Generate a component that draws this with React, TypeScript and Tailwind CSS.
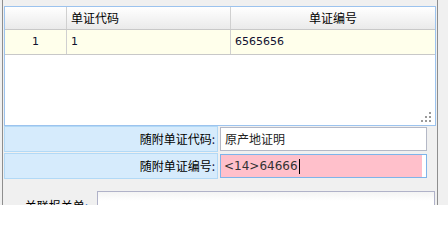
const cjk = { fontFamily: '"Noto Sans CJK SC", "DejaVu Sans", sans-serif' };
const num = { fontFamily: '"DejaVu Sans", "Noto Sans CJK SC", sans-serif' };

const Grip = () => (
  <svg className="absolute right-[3px] bottom-[2px]" width="11" height="11" viewBox="0 0 11 11">
    {[
      [8, 0],
      [4, 4],
      [8, 4],
      [0, 8],
      [4, 8],
      [8, 8],
    ].map(([x, y], i) => (
      <rect key={i} x={x} y={y} width="2" height="2" fill="#9a9a9a" />
    ))}
  </svg>
);

const FormRow = ({ label, children }: { label: string; children: React.ReactNode }) => (
  <div className="flex h-[26px] items-stretch">
    <div
      className="w-[214px] flex items-center justify-end pr-[2px] bg-[#d6ebfc] border border-[#b2d9f6] text-[12px] text-black"
      style={cjk}
    >
      {label}
      <span className="text-[#1a1a4a]">:</span>
    </div>
    <div className="w-[2px]" />
    <div className="flex-1 flex items-center pr-[9px] py-[1px]">{children}</div>
  </div>
);

export default function App() {
  return (
    <div className="w-[448px] h-[205px] bg-[#f0f0f0] overflow-hidden">
      <div className="ml-[2px] w-[436px] h-[205px] border-l border-r border-[#8e8e8e] pt-[6px] pl-[1px] pr-[1px]">
        {/* grid */}
        <div className="relative h-[120px] border border-[#9cc3ee] bg-white">
          <div className="flex h-[23px] border-b border-[#c8c8c8] bg-gradient-to-b from-white to-[#eaeaea] text-[12px] text-black" style={cjk}>
            <div className="w-[62px] border-r border-[#d0d0d0]" />
            <div className="w-[164px] border-r border-[#d0d0d0] flex items-center pl-[4px]">单证代码</div>
            <div className="flex-1 flex items-center justify-center">单证编号</div>
          </div>
          <div className="flex h-[25px] border-b border-[#c8c8c8] bg-[#ffffeb] text-[11px] text-[#101030]" style={num}>
            <div className="w-[62px] border-r border-[#d0d0d0] flex items-center justify-center">1</div>
            <div className="w-[164px] border-r border-[#d0d0d0] flex items-center pl-[4px]">1</div>
            <div className="flex-1 flex items-center pl-[4px]">6565656</div>
          </div>
          <Grip />
        </div>
        {/* form */}
        <div className="flex flex-col gap-[1px]">
          <FormRow label="随附单证代码">
            <div className="w-full h-full border border-[#b4b8c6] bg-white flex items-center pl-[4px] text-[12px] text-[#222]" style={cjk}>
              原产地证明
            </div>
          </FormRow>
          <FormRow label="随附单证编号">
            <div className="w-full h-full border border-[#7eb4ea] bg-white pr-[4px]">
              <div className="h-full bg-[#ffc0cb] flex items-center pl-[3px] text-[12px] text-[#333]" style={num}>
                &lt;14&gt;64666
                <span className="inline-block w-[1px] h-[15px] bg-black ml-[1px]" />
              </div>
            </div>
          </FormRow>
        </div>
        <div className="flex items-start mt-[12px]">
          <div className="w-[93px] flex justify-end pr-[9px] pt-[6px] text-[12px] text-black" style={cjk}>
            关联报关单<span className="text-[#1060c0]">:</span>
          </div>
          <div className="flex-1 h-[24px] border border-[#b0b2c8] bg-gradient-to-b from-[#f4f4f4] to-white to-40% mr-[1px]" />
        </div>
      </div>
    </div>
  );
}
